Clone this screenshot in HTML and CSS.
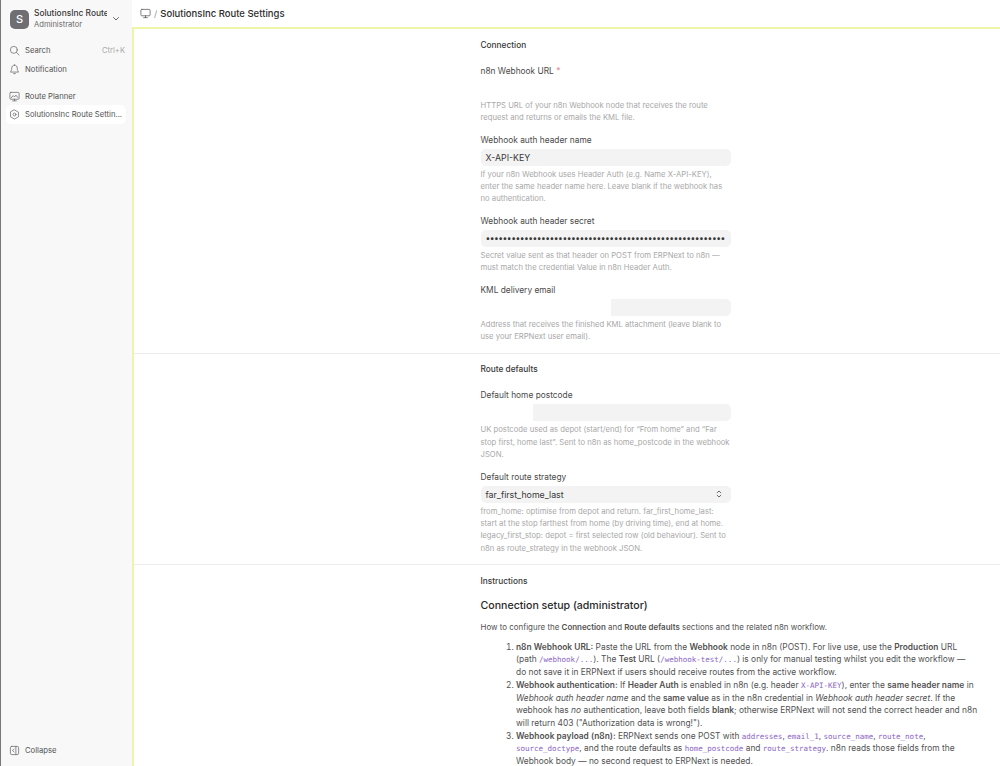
FILE: index.html
```html
<!DOCTYPE html>
<html lang="en">
<head>
    <meta charset="UTF-8">
    <title>SolutionsInc Route Settings</title>
    <link rel="stylesheet" href="styles.css">
</head>
<body>
    <aside class="sidebar">
        <div class="brand">
            <div class="brand-logo">S</div>
            <div class="brand-text">
                <div class="brand-name">SolutionsInc Route</div>
                <div class="brand-role">Administrator</div>
            </div>
            <svg class="brand-caret" viewBox="0 0 10 10"><path d="M2.5 3.5 5 6 7.5 3.5"/></svg>
        </div>
        <div class="nav-group">
            <div class="nav-item">
                <svg class="nav-icon" viewBox="0 0 12 12"><circle cx="5.3" cy="5.3" r="3.8"/><path d="M8.2 8.2 11 11"/></svg>
                <span class="nav-label">Search</span>
                <span class="nav-hint">Ctrl+K</span>
            </div>
            <div class="nav-item">
                <svg class="nav-icon" viewBox="0 0 12 12"><path d="M6 1.2C4 1.2 3 2.8 3 4.5 3 7 2 8 1.5 8.8h9C10 8 9 7 9 4.5 9 2.8 8 1.2 6 1.2Z"/><path d="M5 10.5h2"/></svg>
                <span class="nav-label">Notification</span>
            </div>
        </div>
        <div class="nav-group">
            <div class="nav-item">
                <svg class="nav-icon" viewBox="0 0 12 12"><rect x="1" y="1.5" width="10" height="7.5" rx="1"/><path d="M6 9v1.5M4 10.8h4M2.5 7.5 4.5 5 6 6.5 7.5 4.5 9.5 7"/></svg>
                <span class="nav-label">Route Planner</span>
            </div>
            <div class="nav-item nav-item--active">
                <svg class="nav-icon" viewBox="0 0 12 12"><path d="M6 1 10.3 3.5V8.5L6 11 1.7 8.5V3.5Z"/><circle cx="6" cy="6" r="1.6"/></svg>
                <span class="nav-label">SolutionsInc Route Settin...</span>
            </div>
        </div>
        <div class="sidebar-foot">
            <div class="nav-item">
                <svg class="nav-icon" viewBox="0 0 12 12"><rect x="1.5" y="1.5" width="9" height="9" rx="1.5"/><path d="M7.5 1.5v9M5.5 4.5 3.8 6l1.7 1.5"/></svg>
                <span class="nav-label">Collapse</span>
            </div>
        </div>
    </aside>

    <div class="main">
        <header class="topbar">
            <svg class="topbar-icon" viewBox="0 0 12 12"><rect x="1" y="1.5" width="10" height="7" rx="1"/><path d="M6 8.5v2M4 10.5h4"/></svg>
            <span class="topbar-sep">/</span>
            <span class="topbar-title">SolutionsInc Route Settings</span>
        </header>

        <div class="page">
            <section class="section">
                <div class="form-col">
                    <h3 class="section-title">Connection</h3>
                    <div class="field">
                        <label class="field-label">n8n Webhook URL <span class="req">*</span></label>
                        <div class="control control--blank"></div>
                        <p class="help">HTTPS URL of your n8n Webhook node that receives the route request and returns or emails the KML file.</p>
                    </div>
                    <div class="field">
                        <label class="field-label">Webhook auth header name</label>
                        <div class="control">X-API-KEY</div>
                        <p class="help">If your n8n Webhook uses Header Auth (e.g. Name X-API-KEY), enter the same header name here. Leave blank if the webhook has no authentication.</p>
                    </div>
                    <div class="field">
                        <label class="field-label">Webhook auth header secret</label>
                        <div class="control control--secret">••••••••••••••••••••••••••••••••••••••••••••••••••••••••</div>
                        <p class="help">Secret value sent as that header on POST from ERPNext to n8n — must match the credential Value in n8n Header Auth.</p>
                    </div>
                    <div class="field">
                        <label class="field-label">KML delivery email</label>
                        <div class="control control--email"></div>
                        <p class="help">Address that receives the finished KML attachment (leave blank to use your ERPNext user email).</p>
                    </div>
                </div>
            </section>

            <section class="section">
                <div class="form-col">
                    <h3 class="section-title">Route defaults</h3>
                    <div class="field">
                        <label class="field-label">Default home postcode</label>
                        <div class="control control--postcode"></div>
                        <p class="help">UK postcode used as depot (start/end) for “From home” and “Far stop first, home last”. Sent to n8n as home_postcode in the webhook JSON.</p>
                    </div>
                    <div class="field field--select">
                        <label class="field-label">Default route strategy</label>
                        <div class="control control--select">
                            far_first_home_last
                            <svg class="select-caret" viewBox="0 0 8 10"><path d="M2.2 3.7 4 2 5.8 3.7M2.2 6.3 4 8 5.8 6.3"/></svg>
                        </div>
                        <p class="help">from_home: optimise from depot and return. far_first_home_last: start at the stop farthest from home (by driving time), end at home. legacy_first_stop: depot = first selected row (old behaviour). Sent to n8n as route_strategy in the webhook JSON.</p>
                    </div>
                </div>
            </section>

            <section class="section section--last">
                <h3 class="section-title">Instructions</h3>
                <h2 class="doc-title">Connection setup (administrator)</h2>
                <p class="doc-intro">How to configure the <b>Connection</b> and <b>Route defaults</b> sections and the related n8n workflow.</p>
                <ol class="doc-list">
                    <li><b>n8n Webhook URL:</b> Paste the URL from the <b>Webhook</b> node in n8n (POST). For live use, use the <b>Production</b> URL (path <code>/webhook/...</code>). The <b>Test</b> URL (<code>/webhook-test/...</code>) is only for manual testing whilst you edit the workflow — do&nbsp;not save it in ERPNext if users should receive routes from the active workflow.</li>
                    <li><b>Webhook authentication:</b> If <b>Header Auth</b> is enabled in n8n (e.g. header <code>X-API-KEY</code>), enter the <b>same header name</b> in <i>Webhook auth header name</i> and the <b>same value</b> as in the n8n credential in <i>Webhook auth header secret</i>. If the webhook has <i>no</i> authentication, leave both fields <b>blank</b>; otherwise ERPNext will not send the correct header and n8n will return 403 ("Authorization data is wrong!").</li>
                    <li><b>Webhook payload (n8n):</b> ERPNext sends one POST with <code>addresses</code>, <code>email_1</code>, <code>source_name</code>, <code>route_note</code>, <code>source_doctype</code>, and the route defaults as <code>home_postcode</code> and <code>route_strategy</code>. n8n reads those fields from the Webhook body — no second request to ERPNext is needed.</li>
                </ol>
            </section>
        </div>
    </div>
</body>
</html>
```

FILE: styles.css
```css
* {
    margin: 0;
    padding: 0;
    box-sizing: border-box;
}

html, body {
    height: 100%;
    overflow: hidden;
}

body {
    display: flex;
    font-family: 'Inter', sans-serif;
    color: #383838;
    background: #fff;
}

svg {
    fill: none;
    stroke: currentColor;
    stroke-width: 0.8;
    stroke-linecap: round;
    stroke-linejoin: round;
}

.sidebar {
    width: 132px;
    height: 766px;
    flex-shrink: 0;
    display: flex;
    flex-direction: column;
    background: #f8f8f8;
    border-left: 1px solid #777;
    padding: 0 6px 0 5px;
}

.brand {
    display: flex;
    align-items: center;
    height: 38px;
    padding-left: 4px;
    margin-bottom: 3.25px;
}

.brand-logo {
    width: 19px;
    height: 19px;
    border-radius: 5px;
    background: #6e6e73;
    color: #fff;
    font-size: 11px;
    font-weight: 500;
    display: flex;
    align-items: center;
    justify-content: center;
    flex-shrink: 0;
}

.brand-text {
    width: 73px;
    margin-left: 5px;
    overflow: hidden;
    white-space: nowrap;
}

.brand-name {
    font-size: 8.4px;
    font-weight: 500;
    color: #383838;
    line-height: 12px;
}

.brand-role {
    font-size: 7.6px;
    color: #6a6a6a;
    line-height: 12px;
}

.brand-caret {
    width: 10px;
    height: 10px;
    margin-left: 4px;
    color: #444;
}

.nav-group {
    margin-bottom: 8.5px;
}

.nav-item {
    display: flex;
    align-items: center;
    height: 18.5px;
    padding: 0 1px 0 3px;
    border-radius: 5px;
    font-size: 7.7px;
    color: #525252;
}

.nav-item--active {
    background: #fff;
}

.nav-icon {
    width: 11px;
    height: 11px;
    flex-shrink: 0;
    margin-right: 5px;
    color: #666;
}

.nav-label {
    white-space: nowrap;
}

.nav-hint {
    margin-left: auto;
    font-size: 7.6px;
    color: #a8a8a8;
}

.sidebar-foot {
    margin-top: auto;
    padding-bottom: 6px;
}

.main {
    flex: 1;
    min-width: 0;
    display: flex;
    flex-direction: column;
    height: 766px;
}

.topbar {
    height: 27px;
    flex-shrink: 0;
    display: flex;
    align-items: center;
    padding-left: 8px;
}

.topbar-icon {
    width: 11px;
    height: 11px;
    color: #555;
}

.topbar-sep {
    margin: 0 3px;
    font-size: 9px;
    color: #999;
}

.topbar-title {
    font-size: 9.5px;
    font-weight: 500;
    color: #2e2e2e;
}

.page {
    flex: 1;
    overflow: hidden;
    border-top: 2px solid #eff5a6;
    border-left: 2px solid #eff5a6;
}

.section {
    padding: 9.5px 20px 9.5px 346.5px;
    border-bottom: 1px solid #ededed;
}

.section--last {
    border-bottom: none;
}

.form-col {
    width: 250px;
}

.section-title {
    font-size: 8.3px;
    font-weight: 500;
    line-height: 12px;
    color: #383838;
    margin-bottom: 14px;
}

.section--last .section-title {
    margin-bottom: 11px;
}

.field {
    margin-bottom: 9.5px;
}

.field:last-child {
    margin-bottom: 0;
}

.field--select {
    margin-top: 10px;
}

.field-label {
    display: block;
    font-size: 8.35px;
    line-height: 12px;
    color: #4a4a4a;
    margin-bottom: 3px;
}

.req {
    color: #e58a9c;
}

.control {
    height: 17px;
    background: #f3f3f3;
    border-radius: 5px;
    padding: 0 5px;
    font-size: 8.8px;
    line-height: 17px;
    color: #383838;
    white-space: nowrap;
    overflow: hidden;
}

.control--blank {
    height: 17.5px;
    background: #fff;
}

.control--secret {
    letter-spacing: -0.51px;
    font-size: 8.5px;
}

.control--email {
    background: linear-gradient(to right, #fff 130px, #f3f3f3 130px);
}

.control--postcode {
    background: linear-gradient(to right, #fff 52px, #f3f3f3 52px);
}

.control--select {
    display: flex;
    align-items: center;
    justify-content: space-between;
    padding-right: 8px;
}

.select-caret {
    width: 8px;
    height: 10px;
    color: #444;
}

.help {
    margin-top: 3px;
    font-size: 7.7px;
    line-height: 12.2px;
    color: #a8a8a8;
}

.doc-title {
    font-size: 10.6px;
    font-weight: 500;
    line-height: 16px;
    color: #2a2a2a;
    margin-bottom: 7px;
}

.doc-intro {
    font-size: 7.95px;
    line-height: 12px;
    color: #525252;
    margin-bottom: 8px;
}

.doc-intro b,
.doc-list b {
    font-weight: 600;
}

.doc-list {
    padding-left: 35.5px;
    font-size: 8.4px;
    line-height: 12.7px;
    color: #525252;
}

code {
    font-family: 'DejaVu Sans Mono', monospace;
    font-size: 7.5px;
    line-height: 1;
    color: #8a63c4;
}
```
